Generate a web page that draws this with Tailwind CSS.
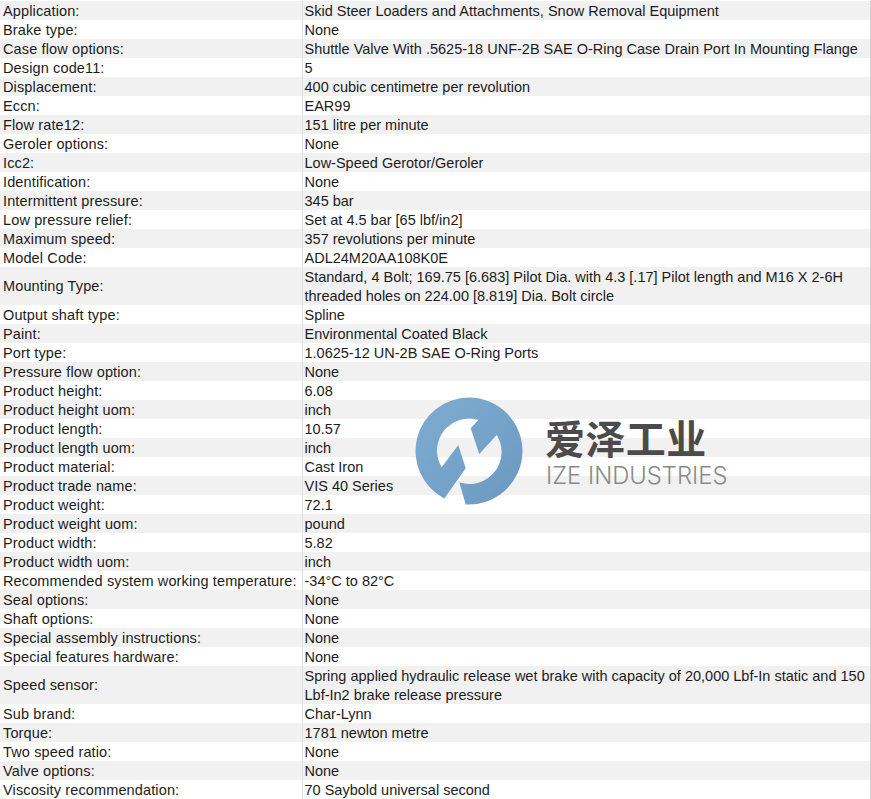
<!doctype html>
<html><head><meta charset="utf-8"><script src="https://cdn.jsdelivr.net/npm/@tailwindcss/browser@4"></script></head>
<body class="bg-white">
<div class="relative h-[799px] w-[871px] overflow-hidden bg-white font-['Liberation_Sans',Arial,sans-serif] text-[14.5px] leading-[19px] text-[#1c1c1c]">
<table class="mt-px w-full table-fixed border-collapse border-r border-b border-[#d4d4d4]">
<colgroup><col class="w-[302px]"><col></colgroup>
<tbody class="[&_td]:py-0 [&_td>div]:mt-px [&_td>div]:-mb-px [&_td:first-child]:pl-[3px] [&_td:first-child]:tracking-[0.13px] [&_td:first-child]:border-r [&_td:first-child]:border-[#ddd] [&_td:last-child]:pl-[2px] [&_td:last-child]:pr-0 [&_tr:nth-child(odd)]:bg-[#f1f1f1]">
<tr><td><div>Application:</div></td><td><div>Skid Steer Loaders and Attachments, Snow Removal Equipment</div></td></tr>
<tr><td><div>Brake type:</div></td><td><div>None</div></td></tr>
<tr><td><div>Case flow options:</div></td><td><div>Shuttle Valve With .5625-18 UNF-2B SAE O-Ring Case Drain Port In Mounting Flange</div></td></tr>
<tr><td><div>Design code11:</div></td><td><div>5</div></td></tr>
<tr><td><div>Displacement:</div></td><td><div>400 cubic centimetre per revolution</div></td></tr>
<tr><td><div>Eccn:</div></td><td><div>EAR99</div></td></tr>
<tr><td><div>Flow rate12:</div></td><td><div>151 litre per minute</div></td></tr>
<tr><td><div>Geroler options:</div></td><td><div>None</div></td></tr>
<tr><td><div>Icc2:</div></td><td><div>Low-Speed Gerotor/Geroler</div></td></tr>
<tr><td><div>Identification:</div></td><td><div>None</div></td></tr>
<tr><td><div>Intermittent pressure:</div></td><td><div>345 bar</div></td></tr>
<tr><td><div>Low pressure relief:</div></td><td><div>Set at 4.5 bar [65 lbf/in2]</div></td></tr>
<tr><td><div>Maximum speed:</div></td><td><div>357 revolutions per minute</div></td></tr>
<tr><td><div>Model Code:</div></td><td><div>ADL24M20AA108K0E</div></td></tr>
<tr><td><div class="!mt-0 !mb-0">Mounting Type:</div></td><td><div>Standard, 4 Bolt; 169.75 [6.683] Pilot Dia. with 4.3 [.17] Pilot length and M16 X 2-6H threaded holes on 224.00 [8.819] Dia. Bolt circle</div></td></tr>
<tr><td><div>Output shaft type:</div></td><td><div>Spline</div></td></tr>
<tr><td><div>Paint:</div></td><td><div>Environmental Coated Black</div></td></tr>
<tr><td><div>Port type:</div></td><td><div>1.0625-12 UN-2B SAE O-Ring Ports</div></td></tr>
<tr><td><div>Pressure flow option:</div></td><td><div>None</div></td></tr>
<tr><td><div>Product height:</div></td><td><div>6.08</div></td></tr>
<tr><td><div>Product height uom:</div></td><td><div>inch</div></td></tr>
<tr><td><div>Product length:</div></td><td><div>10.57</div></td></tr>
<tr><td><div>Product length uom:</div></td><td><div>inch</div></td></tr>
<tr><td><div>Product material:</div></td><td><div>Cast Iron</div></td></tr>
<tr><td><div>Product trade name:</div></td><td><div>VIS 40 Series</div></td></tr>
<tr><td><div>Product weight:</div></td><td><div>72.1</div></td></tr>
<tr><td><div>Product weight uom:</div></td><td><div>pound</div></td></tr>
<tr><td><div>Product width:</div></td><td><div>5.82</div></td></tr>
<tr><td><div>Product width uom:</div></td><td><div>inch</div></td></tr>
<tr><td><div>Recommended system working temperature:</div></td><td><div>-34°C to 82°C</div></td></tr>
<tr><td><div>Seal options:</div></td><td><div>None</div></td></tr>
<tr><td><div>Shaft options:</div></td><td><div>None</div></td></tr>
<tr><td><div>Special assembly instructions:</div></td><td><div>None</div></td></tr>
<tr><td><div>Special features hardware:</div></td><td><div>None</div></td></tr>
<tr><td><div class="!mt-0 !mb-0">Speed sensor:</div></td><td><div>Spring applied hydraulic release wet brake with capacity of 20,000 Lbf-In static and 150 Lbf-In2 brake release pressure</div></td></tr>
<tr><td><div>Sub brand:</div></td><td><div>Char-Lynn</div></td></tr>
<tr><td><div>Torque:</div></td><td><div>1781 newton metre</div></td></tr>
<tr><td><div>Two speed ratio:</div></td><td><div>None</div></td></tr>
<tr><td><div>Valve options:</div></td><td><div>None</div></td></tr>
<tr><td><div>Viscosity recommendation:</div></td><td><div>70 Saybold universal second</div></td></tr>
</tbody></table>
<svg class="absolute left-[415px] top-[397px] h-[108px] w-[108px]" viewBox="0 0 108 108"><defs><linearGradient id="g" x1="0" y1="0" x2="1" y2="1"><stop offset="0" stop-color="#80acd0"/><stop offset="1" stop-color="#6a99c1"/></linearGradient></defs>
<path fill="url(#g)" d="M29.3 101.45A53.5 53.5 0 0 1 54 0.5A53.5 53.5 0 1 1 50.7 107.4L44.3 85.3A32 32 0 0 0 81.7 38L64.3 57L55.7 31.3L63.3 23A32 32 0 0 0 26.7 70.3L43.3 48L50.7 71.3Z"/>
</svg>
<div class="absolute left-[545px] top-[413px] text-[40px] leading-[48px] font-bold tracking-[0.4px] whitespace-nowrap text-[#4d4a4a] font-['Noto_Sans_CJK_SC',sans-serif]">爱泽工业</div>
<div class="absolute left-[546px] top-[462px] text-[23.8px] leading-[27px] whitespace-nowrap text-[#8a8a8a] font-['Inter',sans-serif] font-light">IZE INDUSTRIES</div>
</div>
</body></html>
